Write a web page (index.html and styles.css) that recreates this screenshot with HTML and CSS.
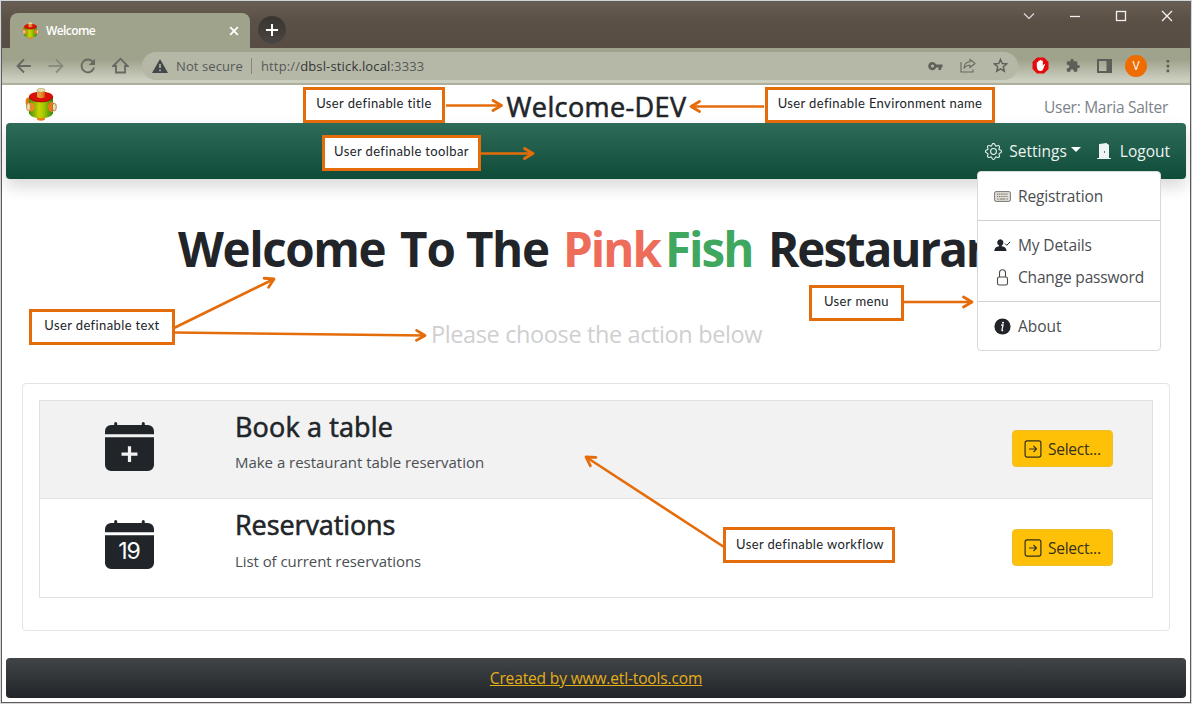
FILE: index.html
```html
<!DOCTYPE html>
<html lang="en">
<head>
<meta charset="utf-8">
<title>Welcome</title>
<link rel="stylesheet" href="styles.css">
</head>
<body>
<svg class="defs" width="0" height="0" aria-hidden="true">
  <defs>
    <linearGradient id="barrel" x1="0" x2="1" y1="0" y2="0"><stop offset="0" stop-color="#3f8f0c"/><stop offset=".42" stop-color="#c9d400"/><stop offset=".6" stop-color="#a8c800"/><stop offset="1" stop-color="#2c8a10"/></linearGradient>
    <linearGradient id="peg" x1="0" x2="1" y1="0" y2="0"><stop offset="0" stop-color="#d9a548"/><stop offset=".5" stop-color="#f08c2c"/><stop offset="1" stop-color="#c85a08"/></linearGradient>
    <symbol id="logo" viewBox="0 0 32 33">
      <ellipse cx="3.200" cy="14" rx="2.600" ry="4.600" fill="#e07a10"/>
      <path d="M12 27h8v4.500q-4 2.500-8 0z" fill="#f07818"/>
      <path d="M4 8v17.500q2.500 4.700 12 4.700t12-4.700V8z" fill="url(#barrel)"/>
      <ellipse cx="16" cy="8.700" rx="12" ry="5.200" fill="#d90f08"/>
      <path d="M4 8.700q2 5.200 12 5.200t12-5.200" fill="none" stroke="#9a0d08" stroke-width=".8"/>
      <path d="M12 2h8v7q-4 2.500-8 0z" fill="url(#peg)"/>
      <ellipse cx="16" cy="2.300" rx="4.200" ry="1.900" fill="#efe0a4" stroke="#a5925a" stroke-width=".6"/>
      <ellipse cx="6" cy="19" rx="3.600" ry="4.600" fill="#ee8a20"/>
      <ellipse cx="3.500" cy="19" rx="2.100" ry="3.900" fill="#e9dca8" stroke="#ab7e3a" stroke-width=".7"/>
      <ellipse cx="26.500" cy="19" rx="3.600" ry="4.900" fill="#e87918"/>
      <ellipse cx="29.300" cy="19" rx="2" ry="4" fill="#f0dfb0" stroke="#8f5a20" stroke-width=".7"/>
    </symbol>
    <symbol id="arrow-box" viewBox="0 0 18 18">
      <rect x="1.100" y=".9" width="15.800" height="16.200" rx="2" fill="none" stroke="currentColor" stroke-width="1.200"/>
      <path d="M5 9h7.500M9.500 6l3 3-3 3" fill="none" stroke="currentColor" stroke-width="1.100"/>
    </symbol>
    <symbol id="calendar" viewBox="0 0 16 16">
      <path d="M4 .5a.5.5 0 0 0-1 0V1H2a2 2 0 0 0-2 2v1h16V3a2 2 0 0 0-2-2h-1V.5a.5.5 0 0 0-1 0V1H4V.5zM16 14V5H0v9a2 2 0 0 0 2 2h12a2 2 0 0 0 2-2z" fill="#212529"/>
    </symbol>
  </defs>
</svg>

<div class="window">
  <div class="titlebar">
    <div class="tab">
      <svg class="favicon" width="17" height="17"><use href="#logo"/></svg>
      <span class="tab-title">Welcome</span>
      <svg class="tab-close" width="10" height="10" viewBox="0 0 10 10"><path d="M1.200 1.200l7.600 7.600M8.800 1.200l-7.600 7.600" stroke="#fff" stroke-width="1.800"/></svg>
    </div>
    <div class="new-tab"><svg width="12" height="12" viewBox="0 0 12 12"><path d="M6 0v12M0 6h12" stroke="#fff" stroke-width="2"/></svg></div>
    <div class="window-buttons">
      <svg width="12" height="12" viewBox="0 0 12 12"><path d="M1 3.500l5 5 5-5" fill="none" stroke="#ddd" stroke-width="1.200"/></svg>
      <svg width="12" height="12" viewBox="0 0 12 12"><path d="M1 6.500h10" stroke="#f2f2f2" stroke-width="1.300"/></svg>
      <svg width="12" height="12" viewBox="0 0 12 12"><rect x="1.500" y="1.500" width="9" height="9" fill="none" stroke="#f2f2f2" stroke-width="1.300"/></svg>
      <svg width="12" height="12" viewBox="0 0 12 12"><path d="M1 1l10 10M11 1L1 11" stroke="#f2f2f2" stroke-width="1.300"/></svg>
    </div>
  </div>

  <div class="browser-bar">
    <div class="nav-icons">
      <svg width="16" height="16" viewBox="0 0 16 16"><path d="M14.800 8H2M8 1.500L1.500 8 8 14.500" fill="none" stroke="#666961" stroke-width="1.800"/></svg>
      <svg width="16" height="16" viewBox="0 0 16 16"><path d="M.5 8H14M8 1.500L14.500 8 8 14.500" fill="none" stroke="#888b7d" stroke-width="1.800"/></svg>
      <svg width="16" height="16" viewBox="0 0 16 16"><path d="M13.300 4.400A6.400 6.400 0 1 0 14.100 9.600" fill="none" stroke="#666961" stroke-width="1.800"/><path d="M15 .8v6.200H8.800z" fill="#666961"/></svg>
      <svg class="home" width="17" height="17" viewBox="0 0 17 17"><path d="M1.300 9L8.500 1.700 15.700 9H13v6.500H4V9z" fill="none" stroke="#666961" stroke-width="1.800"/></svg>
    </div>
    <div class="address">
      <svg class="warn" width="16" height="14" viewBox="0 0 16 14"><path d="M8 0l8 14H0z" fill="#44474a"/><path d="M8 5v4M8 10.500v1.800" stroke="#b4b7a5" stroke-width="1.600"/></svg>
      <span class="insecure">Not secure</span>
      <span class="divider"></span>
      <span class="url">http://<b class="host">dbsl-stick.local</b>:3333</span>
      <div class="address-icons">
        <svg width="15" height="10" viewBox="0 0 15 10"><path fill-rule="evenodd" d="M4.500.9a4.100 4.100 0 1 0 3.700 5.600H10.500V9h2.700V6.500h1.300v-3H8.200A4.100 4.100 0 0 0 4.500.9zm0 2.500a1.600 1.600 0 1 1 0 3.200 1.600 1.600 0 0 1 0-3.200z" fill="#5f625a"/></svg>
        <svg width="16" height="15" viewBox="0 0 16 15"><path d="M1 4v10h12v-2.500M10 1.500l5 4-5 4V7.200C7 7.200 5 8 4 10.500 4 6.500 6.500 4 10 3.800z" fill="none" stroke="#666960" stroke-width="1.100"/></svg>
        <svg width="15" height="15" viewBox="0 0 16 16"><path d="M8 1.500l1.900 4.400 4.700.4-3.600 3.100 1.100 4.700L8 11.600l-4.100 2.500L5 9.400 1.400 6.300l4.700-.4z" fill="none" stroke="#5f625a" stroke-width="1.500"/></svg>
      </div>
    </div>
    <div class="extensions">
      <svg width="17" height="17" viewBox="0 0 17 17"><path d="M5 .5h7L16.500 5v7L12 16.500H5L.5 12V5z" fill="#e5080c"/><path d="M4.800 9V5.600q.8-1 1.500 0V4q.8-1 1.500 0v-.7q.8-1 1.500 0V4q.8-1 1.500 0V9l1-1.700q1.200-.6 1.200.3l-2 4.900q-.7 1.500-2.500 1.500-3.700 0-3.700-5z" fill="#fff"/></svg>
      <svg width="16" height="15" viewBox="0 0 24 24"><path d="M20.500 11H19V7a2 2 0 0 0-2-2h-4V3.500a2.500 2.500 0 0 0-5 0V5H4a2 2 0 0 0-2 2v3.800h1.500a2.700 2.700 0 0 1 0 5.400H2V20a2 2 0 0 0 2 2h3.800v-1.500a2.700 2.700 0 0 1 5.400 0V22H17a2 2 0 0 0 2-2v-4h1.500a2.500 2.500 0 0 0 0-5z" fill="#5c5e58"/></svg>
      <svg width="15" height="14" viewBox="0 0 15 14"><path fill-rule="evenodd" d="M0 0h15v14H0zM2 2v10h7.500V2z" fill="#5c5e58"/></svg>
      <span class="avatar">V</span>
      <svg width="4" height="14" viewBox="0 0 4 14"><path d="M.6 1h2.600v2.600H.6zM.6 5.800h2.600v2.600H.6zM.6 10.600h2.600v2.600H.6z" fill="#5c5e58"/></svg>
    </div>
  </div>

  <div class="page">
    <header class="page-header">
      <svg class="logo" width="32" height="33"><use href="#logo"/></svg>
      <h2 class="app-title">Welcome-DEV</h2>
      <span class="user">User: Maria Salter</span>
    </header>

    <nav class="navbar">
      <a class="nav-link">
        <svg width="17" height="17" viewBox="0 0 16 16" fill="currentColor"><path d="M8 4.754a3.246 3.246 0 1 0 0 6.492 3.246 3.246 0 0 0 0-6.492zM5.754 8a2.246 2.246 0 1 1 4.492 0 2.246 2.246 0 0 1-4.492 0z"/><path d="M9.796 1.343c-.527-1.790-3.065-1.790-3.592 0l-.094.319a.873.873 0 0 1-1.255.52l-.292-.16c-1.640-.892-3.433.902-2.540 2.541l.159.292a.873.873 0 0 1-.52 1.255l-.319.094c-1.790.527-1.790 3.065 0 3.592l.319.094a.873.873 0 0 1 .52 1.255l-.16.292c-.892 1.640.901 3.434 2.541 2.540l.292-.159a.873.873 0 0 1 1.255.52l.094.319c.527 1.790 3.065 1.790 3.592 0l.094-.319a.873.873 0 0 1 1.255-.52l.292.16c1.640.893 3.434-.902 2.540-2.541l-.159-.292a.873.873 0 0 1 .52-1.255l.319-.094c1.790-.527 1.790-3.065 0-3.592l-.319-.094a.873.873 0 0 1-.52-1.255l.16-.292c.893-1.640-.902-3.433-2.541-2.540l-.292.159a.873.873 0 0 1-1.255-.52l-.094-.319zm-2.633.283c.246-.835 1.428-.835 1.674 0l.094.319a1.873 1.873 0 0 0 2.693 1.115l.291-.16c.764-.415 1.600.42 1.184 1.185l-.159.292a1.873 1.873 0 0 0 1.116 2.692l.318.094c.835.246.835 1.428 0 1.674l-.319.094a1.873 1.873 0 0 0-1.115 2.693l.16.291c.415.764-.42 1.600-1.185 1.184l-.291-.159a1.873 1.873 0 0 0-2.693 1.116l-.094.318c-.246.835-1.428.835-1.674 0l-.094-.319a1.873 1.873 0 0 0-2.692-1.115l-.292.16c-.764.415-1.600-.42-1.184-1.185l.159-.291A1.873 1.873 0 0 0 1.945 8.930l-.319-.094c-.835-.246-.835-1.428 0-1.674l.319-.094A1.873 1.873 0 0 0 3.060 4.377l-.16-.292c-.415-.764.42-1.600 1.185-1.184l.292.159a1.873 1.873 0 0 0 2.692-1.115l.094-.319z"/></svg>
        <span class="settings-label">Settings</span><span class="caret"></span>
      </a>
      <a class="nav-link logout">
        <svg width="16" height="16" viewBox="0 0 16 16" fill="currentColor"><path d="M1.500 15a.5.5 0 0 0 0 1h13a.5.5 0 0 0 0-1H13V2.500A1.500 1.500 0 0 0 11.500 1H11V.5a.5.5 0 0 0-.57-.495l-7 1A.5.5 0 0 0 3 1.500V15H1.500zM11 2h.5a.5.5 0 0 1 .5.5V15h-1V2zm-2.500 8c-.276 0-.5-.448-.5-1s.224-1 .5-1 .5.448.5 1-.224 1-.5 1z"/><path d="M11 2h1v13h-1z"/></svg>
        <span class="logout-label">Logout</span>
      </a>
      <div class="dropdown">
        <a class="menu-item"><svg width="17" height="17" viewBox="0 0 17 17"><rect x=".6" y="3.600" width="15.800" height="9.800" rx="1.500" fill="#e3e0d8" stroke="#77756f"/><path d="M3 6.200h11M3 8.500h11" stroke="#77756f" stroke-width="1.200" stroke-dasharray="1.300 .8"/><path d="M3 11h1.500M5.500 11h6M12.500 11H14" stroke="#77756f" stroke-width="1.200"/></svg><span class="t-registration">Registration</span></a>
        <hr class="menu-rule">
        <a class="menu-item"><svg width="17" height="17" viewBox="0 0 17 17"><path d="M6.300 2.200a3.100 3.400 0 0 1 1.500 6.400v.6q4.700.8 4.700 4.800H.3q0-4 4.700-4.800v-.6a3.400 3.400 0 0 1 1.300-6.400z" fill="#212529"/><path d="M11 6.600l1.700 1.700 3.500-3.500" fill="none" stroke="#212529" stroke-width="1"/></svg><span class="t-details">My Details</span></a>
        <a class="menu-item"><svg width="17" height="17" viewBox="0 0 17 17"><rect x="3.500" y="8" width="10" height="8" rx="1.800" fill="none" stroke="#4a4a44" stroke-width="1.100"/><path d="M5.500 8V3.800a3 3 0 0 1 6 0V8" fill="none" stroke="#4a4a44" stroke-width="1.100"/></svg><span class="t-password">Change password</span></a>
        <hr class="menu-rule">
        <a class="menu-item"><svg width="17" height="17" viewBox="0 0 17 17"><circle cx="8.500" cy="8.500" r="8.100" fill="#212529"/><path d="M7 7.200l2.100-.3-1.200 5.200q0 .8 1.200.3" fill="none" stroke="#fff" stroke-width="1.200"/><circle cx="9" cy="4.700" r="1" fill="#fff"/></svg><span class="t-about">About</span></a>
      </div>
    </nav>

    <section class="hero">
      <h1 class="hero-title"><span class="w1">Welcome</span><span class="w2">To</span><span class="w3">The</span><span class="w4 pink">Pink</span><span class="w5 fish">Fish</span><span class="w6">Restauran</span></h1>
      <p class="hero-sub">Please choose the action below</p>
    </section>

    <main class="card">
      <div class="workflow">
        <div class="row striped">
          <svg class="row-icon" width="49" height="49" viewBox="0 0 16 16"><use href="#calendar"/><path d="M8 7.900v5.200M5.400 10.500h5.200" stroke="#f2f2f2" stroke-width="1.050"/></svg>
          <div class="row-text">
            <h3 class="row-title t-book">Book a table</h3>
            <p class="row-desc t-make">Make a restaurant table reservation</p>
          </div>
          <button class="select"><svg width="18" height="18"><use href="#arrow-box"/></svg><span>Select...</span></button>
        </div>
        <div class="row">
          <svg class="row-icon" width="49" height="49" viewBox="0 0 49 49"><use href="#calendar" width="49" height="49"/><text class="day" x="24" y="38.500" text-anchor="middle">19</text></svg>
          <div class="row-text">
            <h3 class="row-title t-res">Reservations</h3>
            <p class="row-desc t-list">List of current reservations</p>
          </div>
          <button class="select"><svg width="18" height="18"><use href="#arrow-box"/></svg><span>Select...</span></button>
        </div>
      </div>
    </main>

    <footer class="footer"><a class="credit">Created by www.etl-tools.com</a></footer>
  </div>
</div>

<svg class="arrows" width="1192" height="704" viewBox="0 0 1192 704">
  <defs>
    <marker id="head" markerUnits="userSpaceOnUse" markerWidth="14" markerHeight="14" refX="11" refY="7" orient="auto"><path d="M2.500 2l8.500 5-8.500 5" fill="none" stroke="#e46c0a" stroke-width="2.800" stroke-linejoin="round" stroke-linecap="round"/></marker>
  </defs>
  <g stroke="#e46c0a" stroke-width="2.600">
    <path d="M446 105.500H501.500" marker-end="url(#head)"/>
    <path d="M764 106.500H691" marker-end="url(#head)"/>
    <path d="M479 153.500H533" marker-end="url(#head)"/>
    <path d="M174 328L274 279" marker-end="url(#head)"/>
    <path d="M174 332.500L425 335.500" marker-end="url(#head)"/>
    <path d="M903 302H972" marker-end="url(#head)"/>
    <path d="M724 547L586 457" marker-end="url(#head)"/>
  </g>
</svg>
<div class="callout c-title">User definable title</div>
<div class="callout c-env">User definable Environment name</div>
<div class="callout c-toolbar">User definable toolbar</div>
<div class="callout c-text">User definable text</div>
<div class="callout c-menu">User menu</div>
<div class="callout c-flow">User definable workflow</div>
</body>
</html>
```
FILE: styles.css
```css
* { box-sizing: border-box; }
body {
  margin: 0;
  width: 1192px;
  height: 704px;
  padding: 1px;
  position: relative;
  overflow: hidden;
  background: #d5d5d5;
  color: #212529;
  font: 15.5px/24px "Open Sans", sans-serif;
}
h1, h2, h3, p { margin: 0; }
svg { display: block; flex: none; }
.defs, .arrows { position: absolute; left: 0; top: 0; }
.window {
  height: 702px;
  border: 1px solid #5c5c5c;
  display: flex;
  flex-direction: column;
  background: #fff;
}

/* Browser chrome */
.titlebar {
  height: 46px;
  display: flex;
  background: linear-gradient(#685e53, #5b5046 40%, #584d43);
}
.tab {
  width: 240px;
  height: 35px;
  margin: 11px 0 0 8px;
  padding: 0 11px 0 12px;
  border-radius: 8px 8px 0 0;
  background: #a0a38c;
  display: flex;
  align-items: center;
}
.tab-title {
  margin-left: 7px;
  color: #fff;
  font-size: 12px;
  font-weight: 600;
  letter-spacing: -.6px;
}
.tab-close { margin-left: auto; }
.new-tab {
  width: 28px;
  height: 28px;
  margin: 14px 0 0 8px;
  border-radius: 50%;
  background: linear-gradient(#383531, #4a4742);
  display: flex;
  align-items: center;
  justify-content: center;
}
.window-buttons {
  margin: 8px 17px 0 auto;
  height: 12px;
  display: flex;
  gap: 34px;
}
.browser-bar {
  height: 37px;
  display: flex;
  align-items: center;
  padding: 0 20px 0 14px;
  background: linear-gradient(#a0a38c, #a0a38c 12px, #cccfc0 32px);
  border-bottom: 2px solid #adb09f;
}
.nav-icons { display: flex; align-items: center; gap: 16px; width: 126px; }
.address {
  width: 876px;
  height: 28px;
  border-radius: 14px;
  background: #b5b8a6;
  display: flex;
  align-items: center;
  padding: 0 10px;
  color: #55585a;
  font-size: 13px;
}
.insecure { margin-left: 8px; letter-spacing: .1px; }
.divider { width: 1px; height: 16px; margin: 0 9px 0 8px; background: #85887b; }
.url { letter-spacing: .15px; }
.host { font-weight: 400; color: #33363a; }
.address-icons { margin-left: auto; display: flex; align-items: center; gap: 17px; }
.extensions { margin-left: auto; display: flex; align-items: center; gap: 16px; }
.avatar {
  width: 22px;
  height: 22px;
  margin: 0 3px 0 -3px;
  border-radius: 50%;
  background: #ef6c00;
  color: #fff;
  font-size: 12px;
  line-height: 22px;
  text-align: center;
}

/* Page */
.page { flex: 1; padding: 0 4px; display: flex; flex-direction: column; }
.page-header {
  height: 38px;
  display: grid;
  grid-template-columns: 1fr auto 1fr;
  align-items: center;
  padding: 0 18px 0 19px;
}
.app-title {
  font-size: 27px;
  line-height: 34px;
  font-weight: 400;
  -webkit-text-stroke: .6px #212529;
  letter-spacing: .4px;
  padding-top: 5px;
}
.user {
  justify-self: end;
  color: #7b8289;
  letter-spacing: -.27px;
  padding-top: 4px;
}
.navbar {
  position: relative;
  height: 56px;
  border-radius: 4px;
  background: linear-gradient(#2e6b59, #0e4c39);
  box-shadow: 0 8px 16px rgba(0, 0, 0, .15);
  display: flex;
  justify-content: flex-end;
  align-items: center;
  padding-right: 16px;
}
.nav-link { display: flex; align-items: center; color: #eef4f1; }
.settings-label { margin-left: 7px; }
.caret {
  margin-left: 4px;
  margin-top: -3px;
  border: 5px solid transparent;
  border-top-color: #fff;
  border-bottom: 0;
}
.logout { margin-left: 15px; }
.logout-label { margin-left: 8px; }
.dropdown {
  position: absolute;
  z-index: 2;
  top: 48px;
  left: 971px;
  width: 184px;
  height: 180px;
  padding: 8px 0;
  background: #fff;
  border: 1px solid #d9d9d9;
  border-radius: 4px;
}
.menu-item {
  height: 32px;
  padding: 0 16px;
  display: flex;
  align-items: center;
  gap: 7px;
  color: #4a4d51;
}
.menu-rule { margin: 8px 0; border: 0; border-top: 1px solid #d0d0d0; }
.t-registration { letter-spacing: -.14px; }
.t-details { letter-spacing: -.12px; }
.t-password { letter-spacing: -.17px; }

.hero { height: 204px; padding-top: 35px; }
.hero-title {
  display: flex;
  width: 972px;
  font-size: 47.500px;
  line-height: 70px;
  font-weight: 700;
  white-space: nowrap;
  padding-left: 172px;
  overflow: hidden;
}
.hero-title span { flex: none; }
.w1 { width: 222px; letter-spacing: -1.4px; }
.w2 { width: 66px; letter-spacing: -1px; }
.w3 { width: 97px; letter-spacing: -1.4px; }
.w4 { width: 102px; letter-spacing: -2px; }
.w5 { width: 103px; letter-spacing: -2px; }
.hero-title .w6 { flex: 1; min-width: 0; overflow: hidden; letter-spacing: -2px; }
.pink { color: #ee6c5a; }
.fish { color: #3fa75e; }
.hero-sub {
  margin: 32px 0 0;
  padding-left: 425px;
  color: #cfcfcf;
  font-size: 23.500px;
  line-height: 36px;
  letter-spacing: -.38px;
}

.card {
  height: 248px;
  margin: 0 16px;
  padding: 16px;
  border: 1px solid #e4e4e4;
  border-radius: 4px;
}
.workflow { border: 1px solid #dee2e6; height: 198px; }
.row { height: 98px; display: flex; }
.striped { background: #f2f2f2; border-bottom: 1px solid #dee2e6; }
.row-icon { margin: 21px 0 0 65px; overflow: visible; }
.row-text { margin-left: 81px; }
.row-title {
  font-size: 27px;
  line-height: 34px;
  font-weight: 400;
  -webkit-text-stroke: .6px #212529;
  padding-top: 9px;
}
.row-desc { margin-top: 6px; font-size: 15px; line-height: 24px; color: #4b4f53; }
.row:last-child .row-desc { margin-top: 7px; }
.t-book { letter-spacing: .15px; }
.t-res { letter-spacing: -.1px; }
.t-make { letter-spacing: -.03px; }
.t-list { letter-spacing: -.07px; }
.day { fill: #fff; font: 23px Inter, sans-serif; letter-spacing: -1px; }
.select {
  margin: 29px 39px 0 auto;
  width: 101px;
  height: 37px;
  padding: 0 0 0 11px;
  border: 1px solid #f0bd2d;
  border-radius: 4px;
  background: #ffc107;
  color: #33301c;
  display: flex;
  align-items: center;
  gap: 6px;
  font: 15.500px/24px "Open Sans", sans-serif;
  letter-spacing: -.25px;
}
.row:last-child .select { margin-top: 30px; }
.footer {
  height: 40px;
  margin-top: 27px;
  border-radius: 4px;
  background: linear-gradient(#414548, #212529);
  text-align: center;
  line-height: 40px;
}
.credit { color: #e5ae17; text-decoration: underline; letter-spacing: -.14px; }

/* Annotations */
.callout {
  position: absolute;
  z-index: 3;
  height: 36px;
  border: 3px solid #e46c0a;
  background: #fff;
  font: 13px/26px Lato, sans-serif;
  letter-spacing: .38px;
  text-align: center;
  white-space: nowrap;
}
.arrows { z-index: 3; }
.c-title { left: 303px; top: 87px; width: 142px; }
.c-env { left: 765px; top: 87px; width: 230px; }
.c-toolbar { left: 322px; top: 135px; width: 159px; }
.c-text { left: 29px; top: 309px; width: 146px; }
.c-menu { left: 809px; top: 285px; width: 95px; }
.c-flow { left: 723px; top: 527px; width: 172px; line-height: 28px; padding-left: 2px; }
```
